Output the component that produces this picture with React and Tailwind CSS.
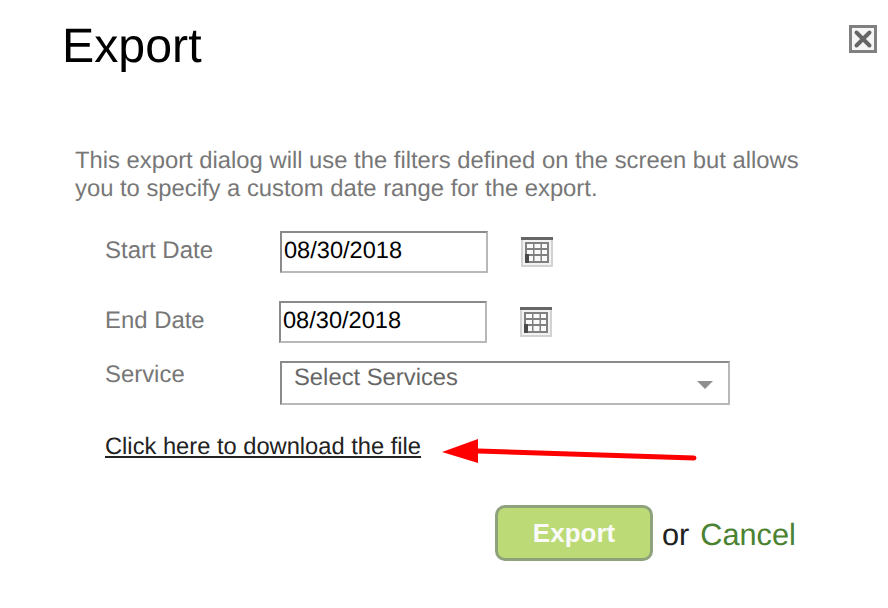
import React from "react";

const CalendarIcon = () => (
  <svg width="34" height="32" viewBox="0 0 34 32" className="block blur-[0.6px]">
    <rect x="1" y="1" width="32" height="30" rx="1" fill="#d2d2d2" />
    <rect x="1" y="1" width="32" height="3" fill="#666666" />
    <rect x="3" y="4" width="28" height="25" fill="#f2f2f2" />
    <rect x="5" y="6" width="24" height="21" fill="#808080" />
    <g fill="#fafafa">
      <rect x="7" y="8" width="6" height="4" />
      <rect x="14.5" y="8" width="6" height="4" />
      <rect x="22" y="8" width="5" height="4" />
      <rect x="7" y="14" width="6" height="4" />
      <rect x="14.5" y="14" width="6" height="4" />
      <rect x="22" y="14" width="5" height="4" />
      <rect x="9" y="20" width="4" height="5" />
      <rect x="14.5" y="20" width="6" height="5" />
      <rect x="22" y="20" width="5" height="5" />
    </g>
    <rect x="5" y="18" width="4" height="9" fill="#4a4a4a" />
  </svg>
);

const CloseIcon = () => (
  <svg width="28" height="28" viewBox="0 0 28 28" className="block blur-[0.7px]">
    <rect x="1.5" y="1.5" width="25" height="25" fill="#f6f6f6" stroke="#808080" strokeWidth="3" />
    <path d="M7.5 7.5 L20.5 20.5 M20.5 7.5 L7.5 20.5" stroke="#666666" strokeWidth="4" strokeLinecap="round" />
  </svg>
);

const DateField = ({ value }) => (
  <input
    readOnly
    value={value}
    className="h-[42px] w-[208px] border-2 border-t-[#8a8a8a] border-l-[#8a8a8a] border-r-[#b8b8b8] border-b-[#b8b8b8] bg-white pl-[2px] pb-[1px] text-[23.6px] text-black outline-none [text-rendering:geometricPrecision]"
  />
);

export default function App() {
  return (
    <div className="relative h-[608px] w-[888px] overflow-hidden bg-white font-['Liberation_Sans',sans-serif] [text-rendering:geometricPrecision]">
      <div className="flex items-start justify-between pl-[62px] pr-[11px] pt-[19px]">
        <h1 className="text-[48.3px] leading-[55px] text-black">Export</h1>
        <div className="mt-[6px]">
          <CloseIcon />
        </div>
      </div>

      <p className="ml-[75px] mt-[73px] w-[740px] text-[23.8px] leading-[28px] text-[#777777]">
        This export dialog will use the filters defined on the screen but allows you to specify a custom date range for the export.
      </p>

      <div className="ml-[105px] mt-[28px] flex h-[42px] items-center">
        <span className="w-[175px] pb-[3px] text-[24px] text-[#777777]">Start Date</span>
        <DateField value="08/30/2018" />
        <div className="ml-[32px]">
          <CalendarIcon />
        </div>
      </div>

      <div className="ml-[105px] mt-[28px] flex h-[42px] items-center">
        <span className="w-[174px] pb-[3px] text-[23.9px] text-[#777777]">End Date</span>
        <DateField value="08/30/2018" />
        <div className="ml-[32px]">
          <CalendarIcon />
        </div>
      </div>

      <div className="ml-[105px] mt-[18px] flex items-start">
        <span className="w-[175px] text-[23.9px] leading-[27px] text-[#777777]">Service</span>
        <div className="flex h-[44px] w-[450px] justify-between border-2 border-t-[#8a8a8a] border-l-[#8a8a8a] border-r-[#b8b8b8] border-b-[#b8b8b8] bg-white pl-[12px] pr-[15px]">
          <span className="mt-[1px] text-[23.8px] leading-[28px] text-[#666666]">Select Services</span>
          <span className="mt-[18px] h-0 w-0 border-x-[8px] border-t-[8px] border-x-transparent border-t-[#8f8f8f]" />
        </div>
      </div>

      <div className="ml-[105px] mt-[28px]">
        <a href="#" className="text-[23.7px] leading-[28px] text-[#222222] underline">
          Click here to download the file
        </a>
      </div>

      {/* red annotation arrow drawn over the screenshot */}
      <svg width="270" height="40" viewBox="0 0 270 40" className="absolute left-[436px] top-[432px]">
        <path d="M42 19 L258 26" stroke="#ff0000" strokeWidth="5" strokeLinecap="round" />
        <path d="M6 20 L42 7 L42 31 Z" fill="#ff0000" />
      </svg>

      <div className="ml-[495px] mt-[43px] flex items-center">
        <button className="h-[56px] w-[158px] rounded-[10px] border-[3px] border-[#8ea37c] bg-[#bcdb76] text-[26px] font-bold text-[#fafafa]">
          Export
        </button>
        <span className="ml-[9px] mt-[4px] text-[30.7px] leading-[34px] text-[#222222]">or</span>
        <a href="#" className="ml-[11px] mt-[4px] text-[30.7px] leading-[34px] text-[#4b8231]">
          Cancel
        </a>
      </div>
    </div>
  );
}
